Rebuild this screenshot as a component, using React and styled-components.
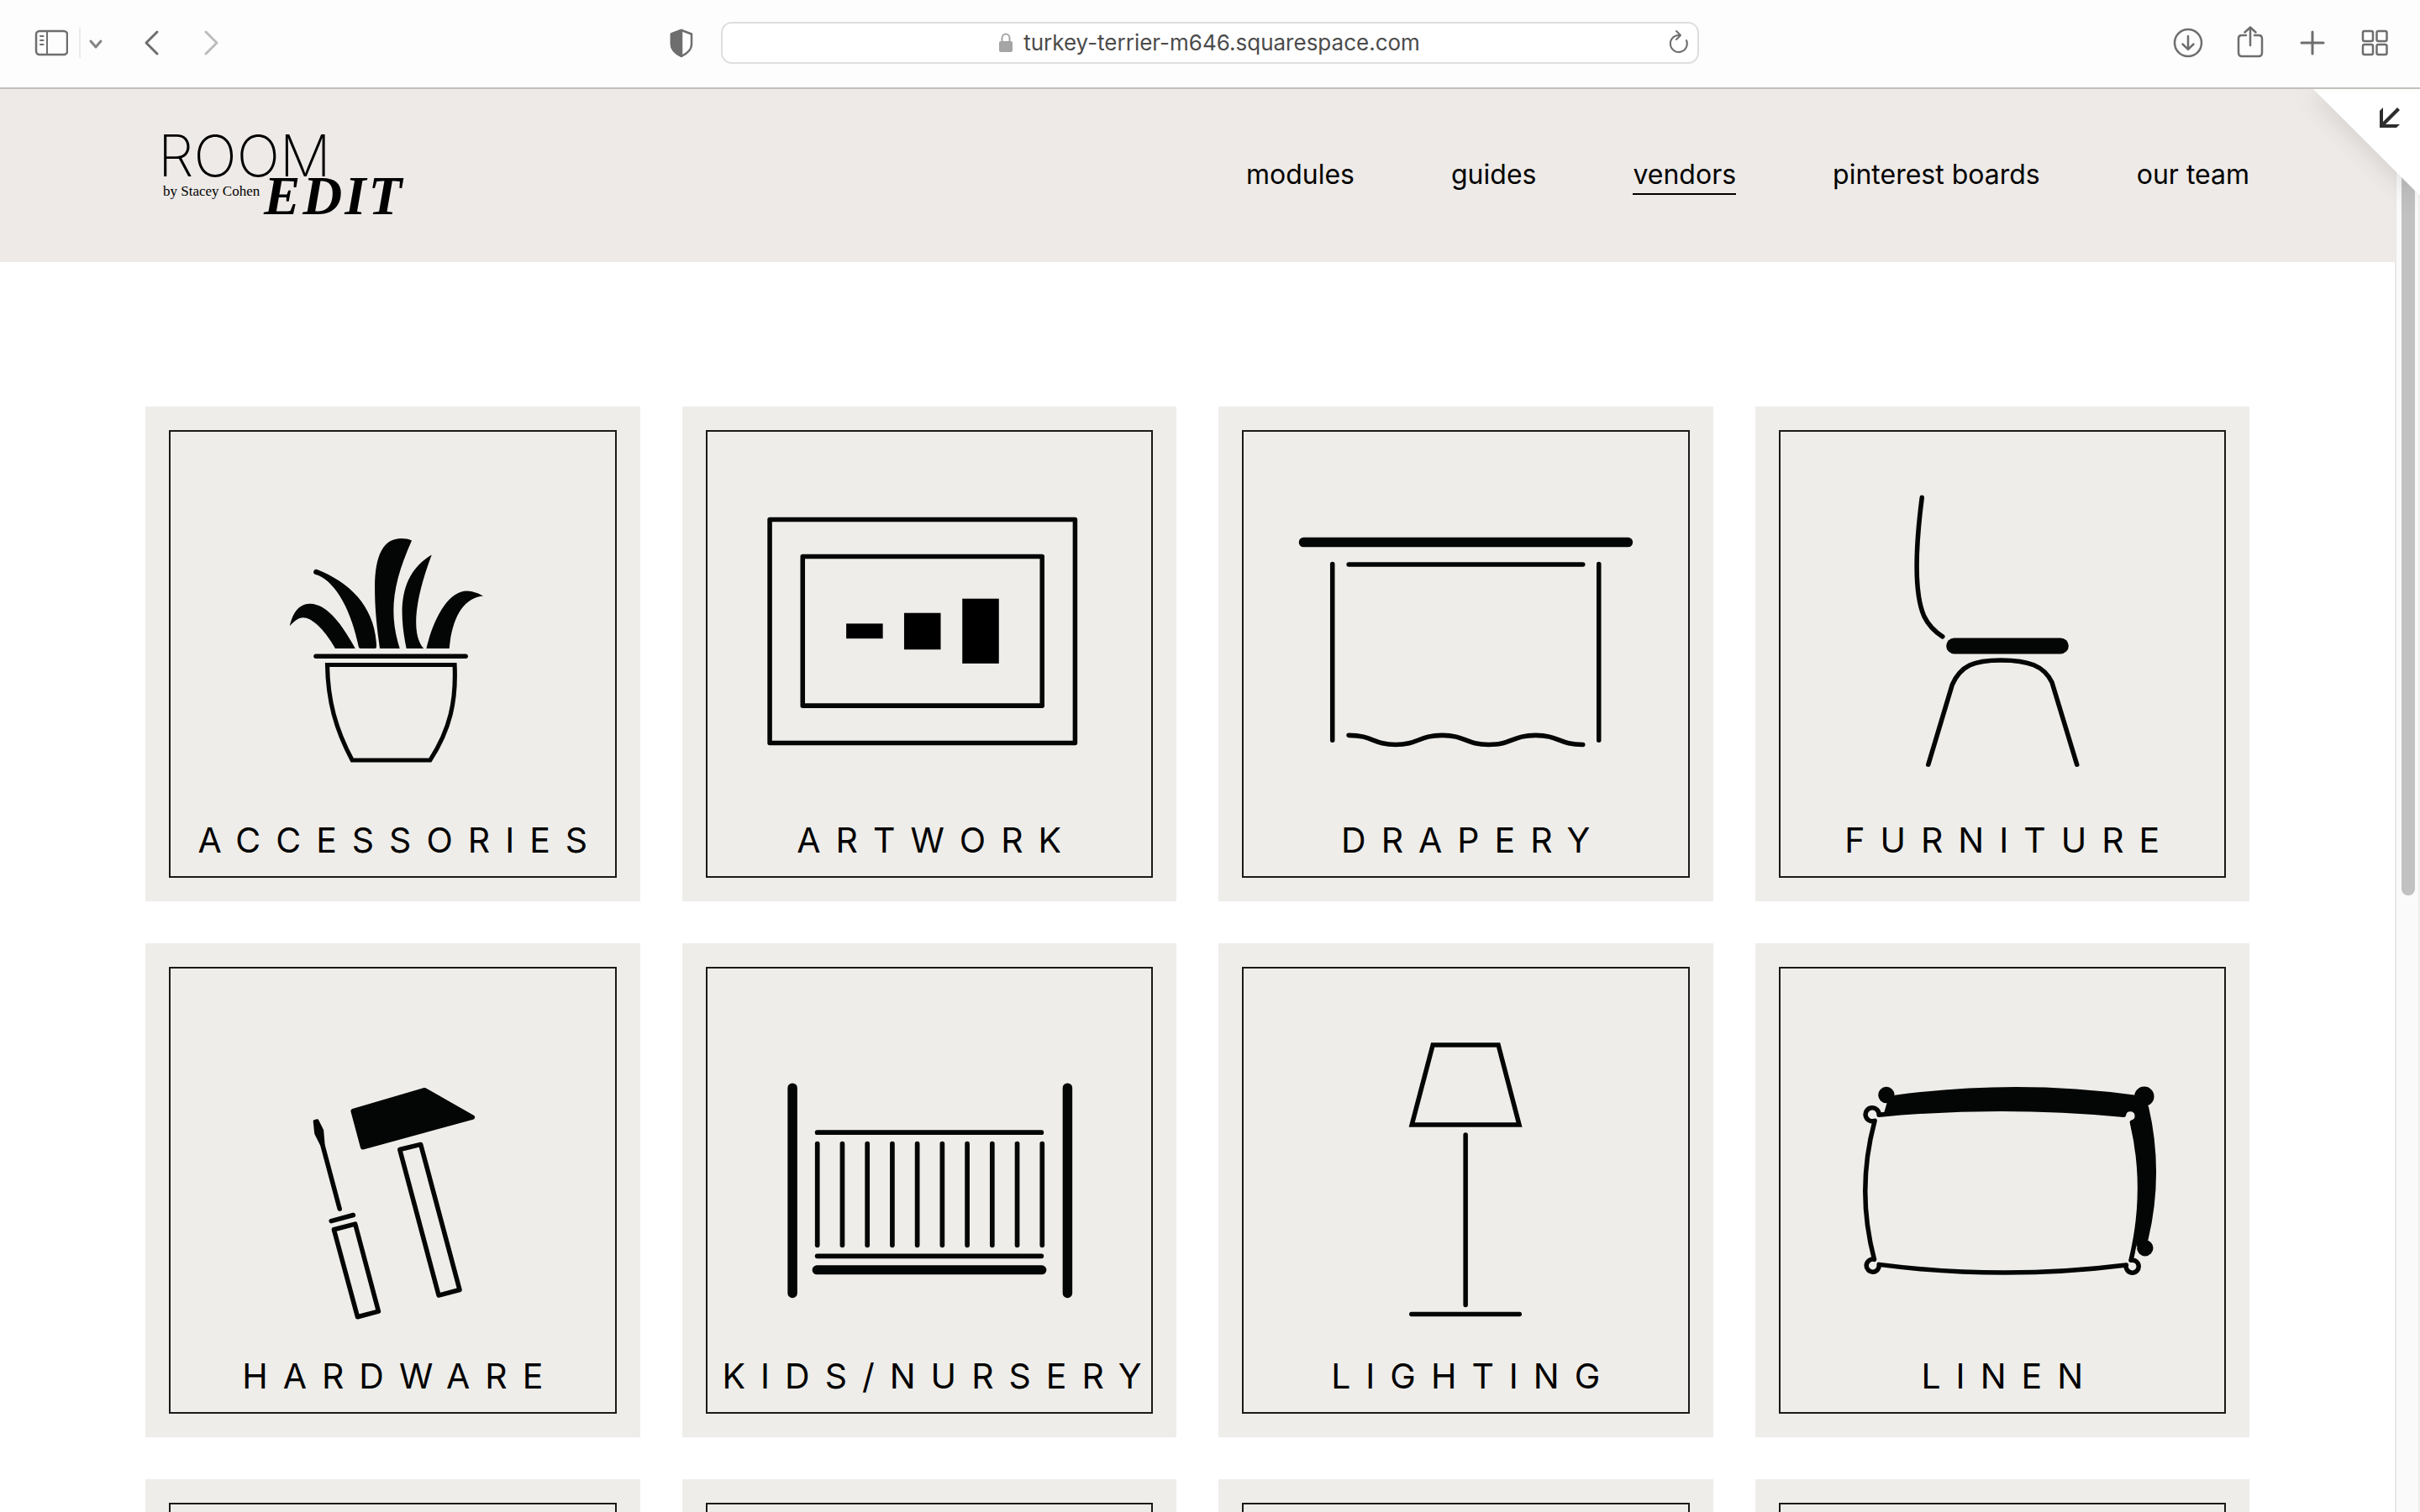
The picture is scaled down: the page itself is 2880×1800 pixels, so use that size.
import React from "react";
import styled, { createGlobalStyle } from "styled-components";

const GlobalStyle = createGlobalStyle`
  *, *::before, *::after { box-sizing: border-box; }
  body {
    margin: 0;
    background: #ffffff;
    color: #000000;
    font-family: Inter, "Liberation Sans", sans-serif;
  }
`;

const Window = styled.div`
  display: flex;
  flex-direction: column;
  height: 100vh;
  overflow: hidden;
`;

const Toolbar = styled.header`
  display: grid;
  grid-template-columns: 1fr minmax(0, 1164px) 1fr;
  align-items: center;
  flex: none;
  height: 106px;
  padding-bottom: 2px;
  background: #fdfdfd;
  border-bottom: 2px solid #c3bfba;
`;

const ToolGroup = styled.div`
  display: flex;
  align-items: center;
  gap: ${(p) => p.$gap}px;
`;

const LeftTools = styled(ToolGroup)`
  justify-content: space-between;
  padding: 0 27px 0 41px;
`;

const RightTools = styled(ToolGroup)`
  justify-content: flex-end;
  padding-right: 34px;
`;

const Divider = styled.span`
  width: 2px;
  height: 36px;
  margin: 0 8px 0 13px;
  background: #ebebeb;
`;

const IconButton = styled.button`
  display: block;
  width: ${(p) => p.$width || 40}px;
  height: 40px;
  padding: 0;
  border: 0;
  background: none;
  color: ${(p) => (p.$faint ? "#bcbcbc" : "#6e6e6e")};

  svg {
    display: block;
    width: 100%;
    height: 100%;
    fill: none;
    stroke: currentColor;
    stroke-width: 2.5;
    stroke-linecap: round;
    stroke-linejoin: round;
  }
`;

const AddressBar = styled.div`
  display: grid;
  grid-template-columns: 40px 1fr 40px;
  align-items: center;
  height: 50px;
  padding-right: 2px;
  border: 2px solid #dedede;
  border-radius: 13px;
  background: #ffffff;
`;

const AddressText = styled.label`
  grid-column: 2;
  display: flex;
  align-items: center;
  justify-content: center;
  gap: 12px;

  svg {
    width: 18px;
    height: 24px;
  }
`;

const AddressInput = styled.input`
  field-sizing: content;
  padding: 0;
  border: 0;
  outline: 0;
  background: none;
  color: #4b4b4b;
  font: 400 26px/36px Inter, "Liberation Sans", sans-serif;
`;

const Viewport = styled.div`
  position: relative;
  display: flex;
  flex: 1;
  min-height: 0;
  overflow: hidden;
`;

const Page = styled.div`
  flex: 1;
  min-width: 0;
`;

const SiteHeader = styled.div`
  display: flex;
  align-items: center;
  justify-content: space-between;
  height: 206px;
  padding: 0 173px;
  background: #eeeae7;
`;

const LogoLink = styled.a`
  display: block;
  color: #000000;

  svg {
    display: block;
    width: 320px;
    height: 140px;
  }
`;

const Nav = styled.nav`
  display: flex;
  gap: 115px;
`;

const NavLink = styled.a`
  border-bottom: 2px solid ${(p) => (p.$active ? "#000000" : "transparent")};
  color: #000000;
  font-size: 32px;
  line-height: 44px;
  text-decoration: none;
  white-space: nowrap;
`;

const Grid = styled.main`
  display: grid;
  grid-template-columns: repeat(4, minmax(0, 1fr));
  gap: 50px;
  padding: 172px 173px;
`;

const Card = styled.a`
  display: flex;
  aspect-ratio: 1;
  padding: 28px;
  background: #eeede9;
  color: #000000;
  text-decoration: none;
`;

const Frame = styled.span`
  display: flex;
  flex: 1;
  flex-direction: column;
  min-width: 0;
  border: 2px solid #1a1a1a;
`;

const Drawing = styled.svg`
  display: block;
  flex: 1;
  width: 100%;
  min-height: 0;
  fill: none;
  stroke: #040605;
  stroke-width: ${(p) => p.$stroke};
  stroke-linecap: round;
`;

const CardLabel = styled.span`
  padding: 0 0 19px;
  font-size: 41px;
  line-height: 48px;
  letter-spacing: 18px;
  text-indent: 18px;
  text-align: center;
  white-space: nowrap;
`;

const ScrollTrack = styled.div`
  flex: none;
  width: 30px;
  padding: 0 4px 0 6px;
  border-left: 2px solid #e8e8e8;
  border-right: 2px solid #f0f0f0;
  background: #fafafa;
`;

const ScrollThumb = styled.div`
  height: 56.7%;
  border-radius: 8px;
  background: #c1c1c1;
`;

const CornerPeel = styled.button`
  position: absolute;
  top: 0;
  right: 0;
  width: 127px;
  height: 127px;
  padding: 0;
  border: 0;
  background: none;
  filter: drop-shadow(-4px 4px 14px rgba(0, 0, 0, 0.11));

  svg {
    display: block;
    width: 100%;
    height: 100%;
  }
`;

const Plant = () => (
  <Drawing viewBox="109 111 1335 1166" $stroke={14}>
    <g fill="#040605" stroke="none">
      <path d="M467 695C480 640 505 628 530 628C580 630 625 690 664 763H604C575 710 535 670 508 670C492 670 480 682 467 695Z" />
      <path d="M548 525C650 565 725 640 728 757Q728 763 723 763H681Q675 763 674 757C650 640 600 555 543 540A8 8 0 0 1 548 525Z" />
      <path d="M738 763C728 690 723 640 723 580C723 480 750 432 803 432C815 432 824 434 834 438C775 570 765 660 798 763Z" />
      <path d="M818 763C790 630 805 535 894 481C845 610 830 720 870 763Z" />
      <path d="M878 763C900 670 945 590 1000 590C1018 590 1035 598 1049 605C990 610 955 670 947 763Z" />
    </g>
    <path d="M546 786H996" />
    <path d="M580 812H963C968 920 950 1005 889 1099H655C605 1005 582 920 580 812Z" strokeWidth="13" />
  </Drawing>
);

const Picture = () => (
  <Drawing viewBox="104 111 1335 1166" $stroke={14}>
    <rect x="291" y="375" width="918" height="672" strokeLinejoin="round" />
    <rect x="390" y="486" width="720" height="449" strokeLinejoin="round" />
    <g fill="#000000" stroke="none">
      <rect x="521" y="688" width="110" height="45" />
      <rect x="695" y="656" width="110" height="110" />
      <rect x="870" y="613" width="110" height="195" />
    </g>
  </Drawing>
);

const Curtain = () => (
  <Drawing viewBox="101 111 1335 1166" $stroke={14}>
    <rect x="267" y="429" width="1004" height="29" rx="14" fill="#040605" stroke="none" />
    <path d="M417 510H1121M368 509V1039M1169 509V1039" />
    <path d="M417 1024C490 1024 490 1052 558 1052S628 1024 698 1024S768 1052 838 1052S909 1024 979 1024S1049 1052 1121 1052" />
  </Drawing>
);

const Chair = () => (
  <Drawing viewBox="99 111 1335 1166" $stroke={14}>
    <path d="M524 309C502 480 502 600 530 665Q548 703 586 727" />
    <rect x="597" y="731" width="368" height="48" rx="24" fill="#040605" stroke="none" />
    <path d="M543 1112L615 872C640 815 680 798 762 798S892 815 915 865L990 1112" />
  </Drawing>
);

const Tools = () => (
  <Drawing viewBox="30 30 528 461" $stroke={5.5} strokeLinejoin="round">
    <path d="M247 199.5L332 174.5L389 207L258.5 242.5Z" fill="#040605" />
    <path d="M302.5 245.3L327.4 239.2L373.7 412.1L348.8 418.7Z" />
    <path d="M201 211.5L204.5 210.5L210.5 222.5L212 240H209.5L202.5 226Z" fill="#040605" strokeWidth="3" />
    <path d="M211 241L231 315.8M221 330.3L247.2 323.2" />
    <path d="M224.2 340.4L249.5 333.8L277.2 437.7L252.3 444.3Z" />
  </Drawing>
);

const SLATS = Array.from({ length: 10 }, (_, i) => 160.6 + i * 29.7);

const Crib = () => (
  <Drawing viewBox="30 30 528 461" $stroke={5.7}>
    <path d="M131 172V416M458 172V416" strokeWidth="11.5" />
    <path d="M160.5 225H427M160.5 372H427" />
    {SLATS.map((x) => (
      <path key={x} d={`M${x} 238.4V359`} />
    ))}
    <path d="M160 388.4H427.5" strokeWidth="11" />
  </Drawing>
);

const Lamp = () => (
  <Drawing viewBox="30 30 528 461" $stroke={5.5}>
    <path d="M255 120.8H332.8L357.7 215.9H230Z" />
    <path d="M293.9 227.7V430.2M229.6 441.2H358" />
  </Drawing>
);

const Pillow = () => (
  <Drawing viewBox="30 30 528 461" $stroke={5.5} strokeLinejoin="round">
    <g fill="#040605" stroke="none">
      <path d="M152 205L157 188L166 180.6Q310 161 452 180.6L467.5 193.8Q486 273 467 353L453 361L457 290L448 205Z" />
      <circle cx="155.8" cy="180.4" r="9.7" />
      <circle cx="462.4" cy="182" r="11.7" />
      <circle cx="463.4" cy="362.4" r="9.7" />
    </g>
    <path
      fill="#eeede9"
      d="M147 204Q292 190 438 204A8 8 0 1 1 448 213Q467 293 446.6 377A7.5 7.5 0 1 1 441 382.6Q294 401 147 382A7.5 7.5 0 1 1 141.5 376Q119.6 294 142 211A8 8 0 1 1 147 204Z"
    />
  </Drawing>
);

const CATEGORIES = [
  { name: "ACCESSORIES", Art: Plant },
  { name: "ARTWORK", Art: Picture },
  { name: "DRAPERY", Art: Curtain },
  { name: "FURNITURE", Art: Chair },
  { name: "HARDWARE", Art: Tools },
  { name: "KIDS/NURSERY", Art: Crib },
  { name: "LIGHTING", Art: Lamp },
  { name: "LINEN", Art: Pillow },
];

const NAV_ITEMS = ["modules", "guides", "vendors", "pinterest boards", "our team"];

const Logo = () => (
  <svg viewBox="173 139 320 140" fill="currentColor">
    <text x="188" y="210" fontFamily="Inter, sans-serif" fontSize="68" fontWeight="200">
      ROOM
    </text>
    <text x="194" y="233" fontFamily="'Liberation Serif', serif" fontSize="17">
      by Stacey Cohen
    </text>
    <text x="314" y="255" fontFamily="'Liberation Serif', serif" fontSize="65" fontWeight="700" fontStyle="italic" letterSpacing="3">
      EDIT
    </text>
  </svg>
);

export default function App() {
  return (
    <Window>
      <GlobalStyle />
      <Toolbar>
        <LeftTools $gap={32}>
          <ToolGroup $gap={36}>
            <ToolGroup $gap={0}>
              <IconButton>
                <svg viewBox="0 0 40 40">
                  <rect x="2" y="6" width="37" height="28" rx="4" />
                  <path d="M15 6V34M7 12H10.500M7 17H10.500M7 22H10.500" strokeWidth="2" />
                </svg>
              </IconButton>
              <Divider />
              <IconButton $width={20}>
                <svg viewBox="0 0 20 40">
                  <path d="M4 18L10 25L16 18" strokeWidth="3" opacity="0.85" />
                </svg>
              </IconButton>
            </ToolGroup>
            <ToolGroup $gap={32}>
              <IconButton>
                <svg viewBox="0 0 40 40">
                  <path d="M27 7L14 20L27 33" strokeWidth="3" />
                </svg>
              </IconButton>
              <IconButton $faint>
                <svg viewBox="0 0 40 40">
                  <path d="M13 7L26 20L13 33" strokeWidth="3" />
                </svg>
              </IconButton>
            </ToolGroup>
          </ToolGroup>
          <IconButton>
            <svg viewBox="0 0 40 40">
              <path d="M20 5L32 9.500V22C32 29 26 33 20 36C14 33 8 29 8 22V9.500Z" />
              <path d="M20 5V36C14 33 8 29 8 22V9.500Z" fill="currentColor" />
            </svg>
          </IconButton>
        </LeftTools>

        <AddressBar>
          <AddressText>
            <svg viewBox="0 0 18 24" fill="#a5a5a5">
              <rect x="1" y="10" width="16" height="13" rx="2" />
              <path d="M4.500 11V6.500A4.500 5 0 0 1 13.500 6.500V11" fill="none" stroke="#a5a5a5" strokeWidth="2" />
            </svg>
            <AddressInput readOnly value="turkey-terrier-m646.squarespace.com" />
          </AddressText>
          <IconButton>
            <svg viewBox="0 0 40 40">
              <path d="M29 17A10 10 0 1 1 19 11H22M17 6L22 11L17 16" strokeWidth="2" />
            </svg>
          </IconButton>
        </AddressBar>

        <RightTools $gap={34}>
          <IconButton>
            <svg viewBox="0 0 40 40">
              <circle cx="20" cy="20" r="16" />
              <path d="M20 12V27.500M13.500 21.500L20 27.800L26.500 21.500" />
            </svg>
          </IconButton>
          <IconButton>
            <svg viewBox="0 0 40 40">
              <path d="M15 11H10Q6 11 6 15V31.500Q6 36 10 36H30Q34 36 34 31.500V15Q34 11 30 11H25M20 23V2M13.500 7.500L20 1.500L26.500 7.500" />
            </svg>
          </IconButton>
          <IconButton>
            <svg viewBox="0 0 40 40">
              <path d="M20 7V33M7 20H33" strokeWidth="3" />
            </svg>
          </IconButton>
          <IconButton>
            <svg viewBox="0 0 40 40">
              <rect x="6" y="6" width="12" height="12" rx="2" />
              <rect x="22.500" y="6" width="12" height="12" rx="2" />
              <rect x="6" y="22" width="12" height="12" rx="2" />
              <rect x="22.500" y="22" width="12" height="12" rx="2" />
            </svg>
          </IconButton>
        </RightTools>
      </Toolbar>

      <Viewport>
        <Page>
          <SiteHeader>
            <LogoLink href="#">
              <Logo />
            </LogoLink>
            <Nav>
              {NAV_ITEMS.map((item) => (
                <NavLink key={item} href="#" $active={item === "vendors"}>
                  {item}
                </NavLink>
              ))}
            </Nav>
          </SiteHeader>
          <Grid>
            {CATEGORIES.map(({ name, Art }) => (
              <Card key={name} href="#">
                <Frame>
                  <Art />
                  <CardLabel>{name}</CardLabel>
                </Frame>
              </Card>
            ))}
            {[0, 1, 2, 3].map((n) => (
              <Card key={n} href="#">
                <Frame />
              </Card>
            ))}
          </Grid>
        </Page>
        <ScrollTrack>
          <ScrollThumb />
        </ScrollTrack>
        <CornerPeel>
          <svg viewBox="0 0 127 127">
            <path d="M0 0H127V127Z" fill="#ffffff" />
            <path transform="translate(79 22)" d="M0 4L4 0V17L21 0L24 3L7 20H24L20 24H0Z" fill="#2d2d2d" />
          </svg>
        </CornerPeel>
      </Viewport>
    </Window>
  );
}
